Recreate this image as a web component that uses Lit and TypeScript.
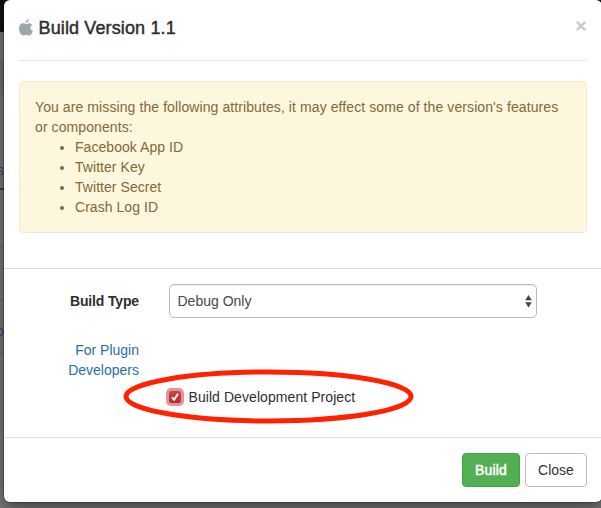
import { LitElement, html, css } from "lit";
import { customElement } from "lit/decorators.js";

@customElement("app-root")
export class AppRoot extends LitElement {
  static styles = css`
    :host {
      display: block;
      position: relative;
      width: 601px;
      height: 508px;
      overflow: hidden;
      box-sizing: border-box;
      padding-left: 4px;
      background: linear-gradient(#111 0 32px, #7b7a78 32px 59px, #706f6d 59px 95px, #7b7a78 95px);
      font: 14px/20px "Liberation Sans", Arial, sans-serif;
      color: #2e2e2e;
    }
    * { box-sizing: border-box; }
    .page { position: absolute; left: 0; top: 0; width: 4px; height: 508px; overflow: hidden; color: #20508a; }
    .frag { position: absolute; right: 0; }
    .frag-a { top: 160px; }
    .frag-b { top: 321px; }
    .rule { position: absolute; left: 0; width: 4px; height: 1px; background: #62615f; }
    .rule-a { top: 188px; height: 2px; background: #20427c; }
    .rule-b { top: 246px; }
    .rule-c { top: 300px; }
    .rule-d { top: 353px; }
    .modal {
      position: relative;
      width: 598px;
      height: 502px;
      background: #fff;
      border-radius: 6px;
      box-shadow: 0 0 0 1px rgba(0, 0, 0, 0.2), 0 5px 15px rgba(0, 0, 0, 0.5);
    }
    header {
      margin: 0 15px;
      width: 568px;
      height: 61px;
      border-bottom: 1px solid #e5e5e5;
      display: flex;
      align-items: flex-start;
      padding-top: 15px;
    }
    .apple { width: 14px; height: 17px; margin: 4px 5.5px 0 0; fill: #9ca6ab; flex: none; }
    h4 { margin: 0; font-size: 18px; line-height: 26px; font-weight: 400; -webkit-text-stroke: 0.45px #2e2e2e; letter-spacing: 0.13px; }
    .dismiss { margin-left: auto; width: 12px; height: 12px; margin-top: 5px; stroke: #ccc; stroke-width: 2.5; }
    .alert {
      width: 568px;
      height: 152px;
      margin: 20px 15px 35px;
      padding: 15px;
      border: 1px solid #f8eac8;
      border-radius: 4px;
      background: #fcf7dd;
      color: #84683a;
      letter-spacing: 0.09px;
    }
    ul { margin: 0; padding-left: 40px; letter-spacing: 0.05px; }
    .form {
      height: 170px;
      border: solid #ddd;
      border-width: 1px 0;
      padding-top: 15px;
      display: grid;
      grid-template-columns: 135px 368px;
      column-gap: 30px;
      grid-template-rows: 34px 40px auto;
      row-gap: 22px;
    }
    .label { text-align: right; font-weight: 700; padding-top: 7px; letter-spacing: -0.15px; }
    .select {
      height: 34px;
      border: 1px solid #bbb;
      border-radius: 5px;
      padding: 0 4px 0 7.5px;
      display: flex;
      align-items: center;
      justify-content: space-between;
      box-shadow: inset 0 1px 1px rgba(0, 0, 0, 0.075);
      color: #484848;
    }
    .arrows { width: 7px; height: 14px; fill: #444; }
    .link { text-align: right; color: #286eb0; }
    .check {
      grid-column: 2;
      grid-row: 3;
      display: flex;
      align-items: center;
      height: 20px;
      margin-top: -15px;
      gap: 7.5px;
      letter-spacing: 0.07px;
    }
    .box {
      width: 12px;
      height: 12px;
      border-radius: 2px;
      background: linear-gradient(#cd4545, #b12c31);
      box-shadow: 0 0 0 3px #e6949a;
      flex: none;
    }
    .box svg { display: block; width: 12px; height: 12px; fill: none; stroke: #fff; stroke-width: 1.8; }
    footer { display: flex; justify-content: flex-end; gap: 5px; padding: 15px 15px 0 0; }
    button {
      height: 34px;
      padding: 0;
      border: 1px solid #bbb;
      border-radius: 4px;
      font: inherit;
      background: #fff;
      color: #333;
      width: 62px;
    }
    .build { width: 58px; background: #52af52; border-color: #46a046; color: #fff; -webkit-text-stroke: 0.5px #fff; letter-spacing: 0.2px; }
    .ring { position: absolute; left: 120px; top: 366px; width: 296px; height: 60px; fill: none; stroke: #ff2200; stroke-width: 5; }
  `;

  render() {
    const missing = ["Facebook App ID", "Twitter Key", "Twitter Secret", "Crash Log ID"];
    return html`
      <div class="page">
        <div class="frag frag-a">s</div>
        <div class="frag frag-b">o</div>
        <div class="rule rule-a"></div>
        <div class="rule rule-b"></div>
        <div class="rule rule-c"></div>
        <div class="rule rule-d"></div>
      </div>
      <div class="modal">
        <header>
          <svg class="apple" viewBox="0 0 14 17">
            <path d="M9.7 0C9.8 1.1 9.4 2 8.8 2.7C8.2 3.4 7.4 3.9 6.7 3.9C6.5 2.9 7 2 7.5 1.4C8.1.7 9 .2 9.7 0ZM7 5C7.8 5 8.7 4.2 10.2 4.2C11.6 4.2 12.6 4.9 13.2 5.7C10.6 7.3 10.9 10.7 13.9 12C13.2 14.2 11.7 16.6 10.1 16.6C9 16.6 8.5 15.9 7.2 15.9C5.9 15.9 5.3 16.6 4.3 16.6C2.5 16.6 0 13.1 0 9.5C0 6.2 2 4.3 4.1 4.3C5.4 4.3 6.2 5 7 5Z" />
          </svg>
          <h4>Build Version 1.1</h4>
          <svg class="dismiss" viewBox="0 0 12 12"><path d="M1.8 1.8L10.2 10.2M10.2 1.8L1.8 10.2" /></svg>
        </header>
        <div class="alert">
          You are missing the following attributes, it may effect some of the version's features<br />or components:
          <ul>${missing.map((m) => html`<li>${m}</li>`)}</ul>
        </div>
        <div class="form">
          <div class="label">Build Type</div>
          <div class="select">
            <span>Debug Only</span>
            <svg class="arrows" viewBox="0 0 7 14"><path d="M3.5 1L6.8 6.2H.2ZM3.5 13.4L6.8 8.2H.2Z" /></svg>
          </div>
          <div class="link">For Plugin<br />Developers</div>
          <div class="check">
            <span class="box"><svg viewBox="0 0 12 12"><path d="M3 6.3L5.1 8.8L9 2.8" /></svg></span>
            <span>Build Development Project</span>
          </div>
        </div>
        <footer>
          <button class="build">Build</button>
          <button>Close</button>
        </footer>
      </div>
      <svg class="ring" viewBox="0 0 296 60"><ellipse cx="148.5" cy="30.5" rx="142.5" ry="24.5" /></svg>
    `;
  }
}
